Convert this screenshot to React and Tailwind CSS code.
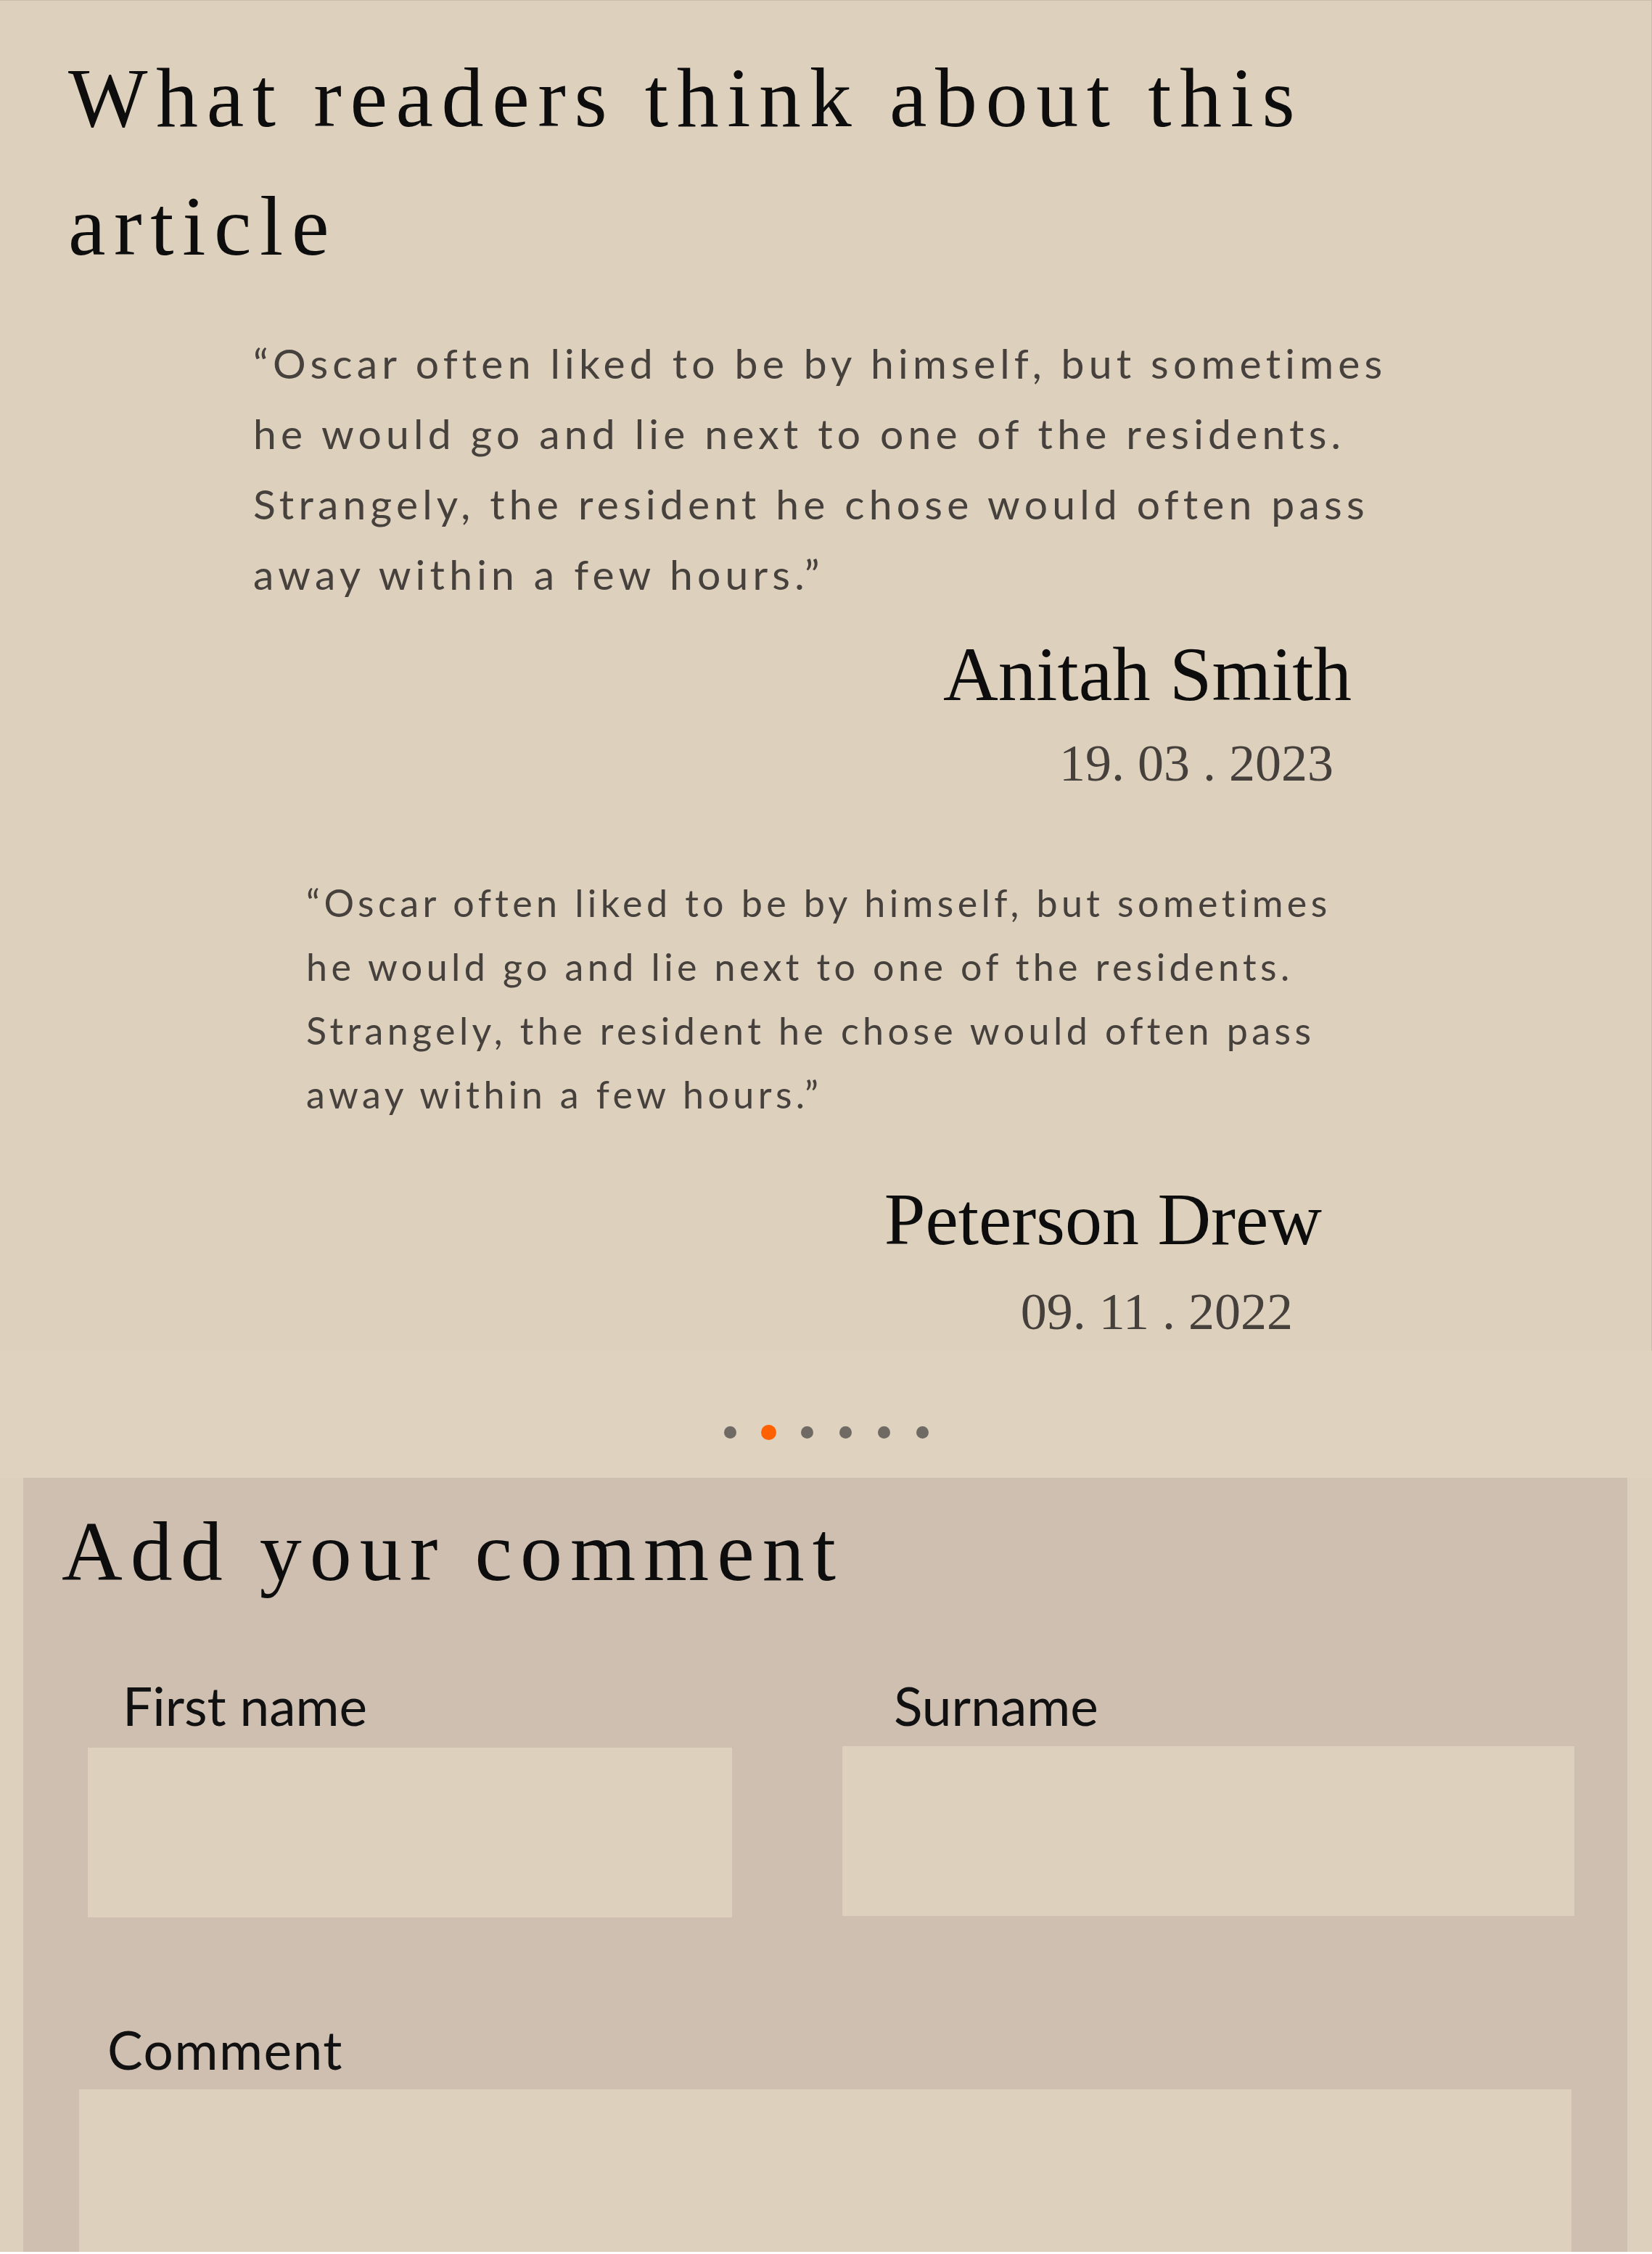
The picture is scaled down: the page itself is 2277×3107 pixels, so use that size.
export default function App() {
  const serif = "font-['Liberation_Serif','Times_New_Roman',serif]";
  const sans = "font-['Lato','Liberation_Sans',sans-serif]";
  return (
    <div className="w-[2277px] bg-[#ddd0bd]">
      <section className="border-r border-t border-[#c9beae] pt-[46px] pb-[11px]">
        <h2 className={`${serif} pl-[94px] text-[116px] leading-[177px] tracking-[0.1em] font-normal text-[#0d0d0d]`}>
          What readers think about this
          <br />
          article
        </h2>

        <div className="mt-[51px]">
          <p className={`${sans} pl-[349px] text-[57px] leading-[97px] tracking-[6.2px] text-[#46413c]`}>
            <span className="block whitespace-nowrap">“Oscar often liked to be by himself, but sometimes</span>
            <span className="block whitespace-nowrap">he would go and lie next to one of the residents.</span>
            <span className="block whitespace-nowrap">Strangely, the resident he chose would often pass</span>
            <span className="block whitespace-nowrap">away within a few hours.”</span>
          </p>
          <div className={`${serif} mt-[27px] pr-[413px] text-right text-[105px] leading-[126px] text-[#0d0d0d]`}>
            Anitah Smith
          </div>
          <div className={`${serif} mt-[16px] pr-[438px] text-right text-[72px] leading-[86px] text-[#45403b]`}>
            19. 03 . 2023
          </div>
        </div>

        <div className="mt-[105px]">
          <p className={`${sans} pl-[422px] text-[52px] leading-[88px] tracking-[5.4px] text-[#46413c]`}>
            <span className="block whitespace-nowrap">“Oscar often liked to be by himself, but sometimes</span>
            <span className="block whitespace-nowrap">he would go and lie next to one of the residents.</span>
            <span className="block whitespace-nowrap">Strangely, the resident he chose would often pass</span>
            <span className="block whitespace-nowrap">away within a few hours.”</span>
          </p>
          <div className={`${serif} mt-[68px] pr-[454px] text-right text-[102px] leading-[122px] text-[#0d0d0d]`}>
            Peterson Drew
          </div>
          <div className={`${serif} mt-[23px] pr-[494px] text-right text-[72px] leading-[86px] text-[#45403b]`}>
            09. 11 . 2022
          </div>
        </div>
      </section>

      <div className="bg-[#dfd2bf] pt-[102px] pb-[52px]">
        <div className="flex justify-center">
          {[false, true, false, false, false, false].map((active, i) => (
            <div key={i} className="flex h-[21px] w-[53px] items-center justify-center">
              <span
                className={
                  active
                    ? "block h-[21px] w-[21px] rounded-full bg-[#ff6100]"
                    : "block h-[17px] w-[17px] rounded-full bg-[#6f6a63]"
                }
              />
            </div>
          ))}
        </div>
      </div>

      <section className="ml-[32px] mr-[34px] bg-[#cfbfb1] pt-[33px]">
        <h2 className={`${serif} pl-[53px] text-[116px] leading-[139px] tracking-[11px] font-normal text-[#0d0d0d]`}>
          Add your comment
        </h2>

        <div className="mt-[101px] grid grid-cols-[888px_1009px] gap-x-[152px] pl-[89px]">
          <label className="flex flex-col">
            <span className={`${sans} pl-[48px] text-[73px] leading-[82px] text-[#111]`}>First name</span>
            <input className="mt-[17px] h-[234px] w-full bg-[#ddd0bc] outline-none" />
          </label>
          <label className="flex flex-col">
            <span className={`${sans} pl-[71px] text-[73px] leading-[82px] text-[#111]`}>Surname</span>
            <input className="mt-[15px] h-[234px] w-full bg-[#ddd0bc] outline-none" />
          </label>
        </div>

        <label className="mt-[141px] flex flex-col pl-[77px] pr-[77px]">
          <span className={`${sans} pl-[39px] text-[73px] leading-[82px] tracking-[1.5px] text-[#111]`}>Comment</span>
          <textarea className="mt-[14px] h-[224px] w-full resize-none bg-[#ddd0bc] outline-none" />
        </label>
      </section>
    </div>
  );
}
